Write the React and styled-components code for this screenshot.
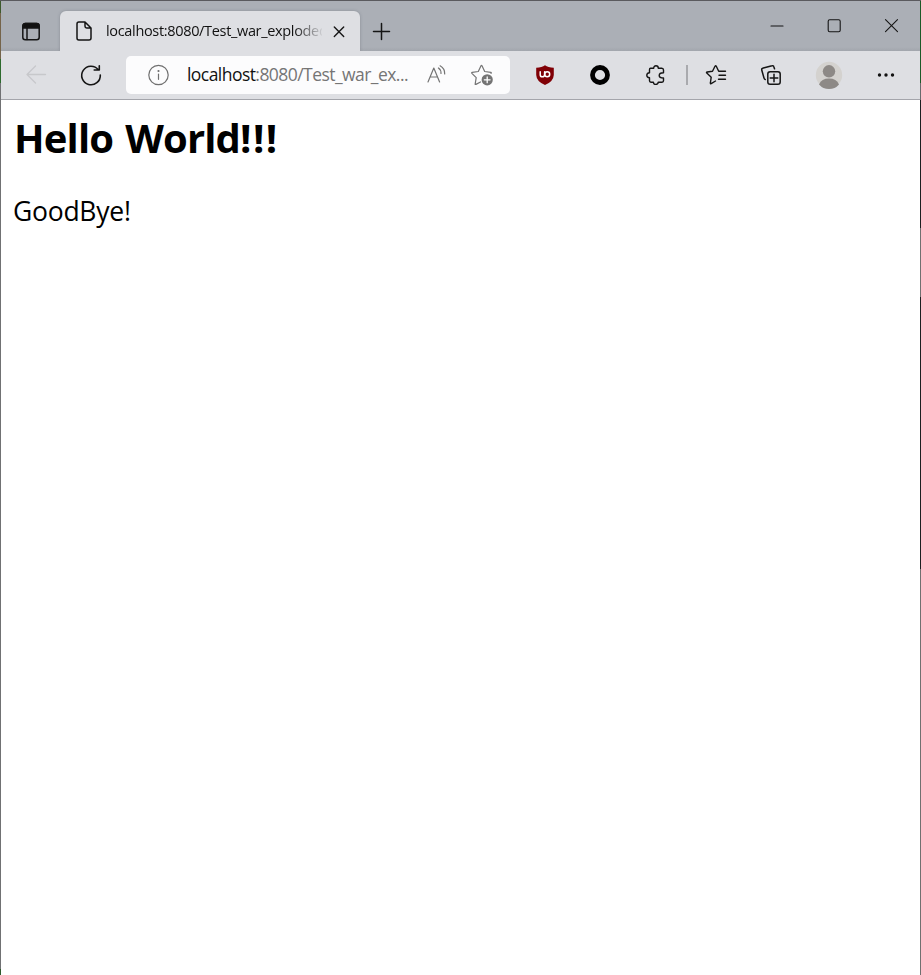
import React from "react";
import styled, { createGlobalStyle } from "styled-components";

const GlobalStyle = createGlobalStyle`
  * { box-sizing: border-box; }
  body { margin: 0; background: #fff; }
`;

const Window = styled.div`
  display: grid;
  grid-template-columns: 1px 919px 1px;
  width: 921px;
  height: 975px;
  overflow: hidden;
  border-top: 1px solid #5a5a5e;
  font-family: "Open Sans", "Noto Sans", sans-serif;
`;
const LeftEdge = styled.div`
  background: linear-gradient(#3d5a2c 0 12px, #75644a 12px 58px, #2d6b2e 58px 82px, #707173 82px 968px, #2d5a2c 968px);
`;
const RightEdge = styled.div`
  background: linear-gradient(#1d5a28 0 82px, #686a6c 82px 99px, #1c1f20 99px 227px, #707070 227px 296px, #1c1f20 296px 568px, #707070 568px);
`;
const Frame = styled.div`
  display: flex;
  flex-direction: column;
  min-width: 0;
  background: #fff;
`;
const TabStrip = styled.header`
  display: flex;
  height: 50px;
  background: linear-gradient(#abafb6 0 46px, #a2a6ad 50px);
`;
const TabMenu = styled.div`
  display: flex;
  align-items: center;
  justify-content: center;
  width: 59px;
  padding: 11px 0 0 1px;
`;
const Tab = styled.div`
  display: flex;
  align-items: center;
  width: 300px;
  height: 40px;
  margin-top: 10px;
  padding: 0 11px 0 15px;
  border-radius: 6px 6px 0 0;
  background: #dedfe3;
  box-shadow: 0 0 3px rgba(70, 75, 85, 0.35);
  clip-path: inset(-3px -3px 0 -3px);
`;
const TabTitle = styled.span`
  width: 216px;
  margin: 0 8px 0 13px;
  overflow: hidden;
  white-space: nowrap;
  font-size: 14.5px;
  line-height: 22px;
  letter-spacing: -0.33px;
  color: #111;
  mask-image: linear-gradient(to right, #000 188px, transparent 218px);
`;
const NewTab = styled.div`
  display: flex;
  align-items: center;
  width: 44px;
  padding: 9px 0 0 12px;
`;
const WindowControls = styled.div`
  display: grid;
  grid-template-columns: repeat(3, 57.5px);
  margin-left: auto;
  height: 49px;
  padding-left: 1px;
  place-items: center;
`;
const Toolbar = styled.nav`
  display: grid;
  grid-template-columns: 70px 40px 15px 384px 7px 56px 54px 57px 5px 54px 56px 60px 54px 1fr;
  align-items: center;
  height: 49px;
  background: #dedfe3;
  border-bottom: 1px solid #a4a5ab;
`;
const Cell = styled.div`
  grid-column: ${(p) => p.$col};
  display: flex;
  align-items: center;
  justify-content: center;
`;
const AddressBar = styled.div`
  grid-column: 4;
  display: flex;
  align-items: center;
  height: 38px;
  border-radius: 5px;
  background: #fcfcfd;
  padding: 0 17px 0 21px;
`;
const Url = styled.span`
  width: 225px;
  margin: 0 15px 2px 18px;
  white-space: nowrap;
  font-size: 17.5px;
  line-height: 26px;
  letter-spacing: -0.55px;
  color: #757575;
`;
const Host = styled.span`
  color: #111;
`;
const Divider = styled.div`
  grid-column: 9;
  justify-self: center;
  width: 2px;
  height: 20px;
  background: #a9aaae;
`;
const Page = styled.main`
  flex: 1;
  padding: 11px 12px;
  color: #000;
`;
const Heading = styled.h1`
  margin: 0 0 0 1px;
  font-size: 40px;
  line-height: 54px;
  font-weight: 700;
  letter-spacing: -0.85px;
  word-spacing: 2.5px;
`;
const Exclamation = styled.span`
  letter-spacing: 1.4px;
`;
const Paragraph = styled.p`
  margin: 28px 0 0;
  font-size: 26.5px;
  line-height: 36px;
  letter-spacing: -0.25px;
`;
const Glyph = styled.svg`
  display: block;
  flex: none;
  overflow: visible;
  fill: none;
  stroke: ${(p) => p.$color || "#151515"};
  stroke-width: ${(p) => p.$weight || 1.5};
  stroke-linecap: round;
  stroke-linejoin: round;
`;
const AddressGlyph = styled(Glyph)`
  margin-left: ${(p) => p.$gap || 0}px;
`;

const Icon = ({ w, h = w, color, weight, children }) => (
  <Glyph width={w} height={h} viewBox={`0 0 ${w} ${h}`} $color={color} $weight={weight}>{children}</Glyph>
);

export default function App() {
  return (
    <>
      <GlobalStyle />
      <Window>
        <LeftEdge />
        <Frame>
          <TabStrip>
            <TabMenu>
              <Icon w={18}>
                <rect x="0.8" y="0.5" width="16.4" height="16.2" rx="2.5" />
                <path d="M1 3Q1 .5 3.5 .5H14.5Q17 .5 17 3V5H1Z" fill="#111" />
                <path d="M5 5V16.5" />
              </Icon>
            </TabMenu>
            <Tab>
              <Icon w={18} h={20}>
                <path d="M3.8 1H10L16 7V17Q16 19 14 19H3.8Q2 19 2 17V3Q2 1 3.8 1ZM10 1V5.3Q10 7 11.7 7H16" />
              </Icon>
              <TabTitle>localhost:8080/Test_war_exploded</TabTitle>
              <Icon w={18} weight={1.4}><path d="M4.3 5L13.7 14.4M13.7 5L4.3 14.4" /></Icon>
            </Tab>
            <NewTab><Icon w={18}><path d="M9.5 1.5V17.5M1.5 9.5H17.5" /></Icon></NewTab>
            <WindowControls>
              <Icon w={14} weight={1.1}><path d="M2 7H14" /></Icon>
              <Icon w={14} weight={1.1}><rect x="1.2" y="0.7" width="12" height="12" rx="1.5" /></Icon>
              <Icon w={14} weight={1.1}><path d="M1.5 .7L13.5 12.7M13.5 .7L1.5 12.7" /></Icon>
            </WindowControls>
          </TabStrip>
          <Toolbar>
            <Cell $col={1}><Icon w={20} color="#c7c8cb" weight={1.3}><path d="M19.5 9.5H1M9.5 1L1 9.5L9.5 18" /></Icon></Cell>
            <Cell $col={2}><Icon w={20} weight={1.6}><path d="M19.3 10A9.3 9.3 0 1 1 17.3 4.7M18.3 .7V5H13.2" /></Icon></Cell>
            <AddressBar>
              <Glyph width="22" height="22" viewBox="0 0 22 22" $color="#707070" $weight={1.2}>
                <circle cx="11.5" cy="11" r="9.7" /><path d="M11.5 10V15.3" /><circle cx="11.5" cy="7" r=".5" fill="#707070" />
              </Glyph>
              <Url><Host>localhost</Host>:8080/Test_war_ex...</Url>
              <Glyph width="20" height="20" viewBox="0 0 20 20" $color="#747474" $weight={1.2}>
                <path d="M1 17L6.8 3L12.6 17M3.2 12H10.4M11.4 3Q14.2 4.8 14 8.5M13.1 .8Q18 3.5 17.7 9" />
              </Glyph>
              <AddressGlyph $gap={24} width="22" height="22" viewBox="0 0 22 22" $color="#747474" $weight={1.2}>
                <path d="M9.5 18L4.9 20.4Q4 20.8 4.2 19.8L5.2 13.6L.9 9.3Q.3 8.6 1.2 8.4L7.3 7.5L10 1.8Q10.5 .9 11 1.8L13.7 7.5L19.8 8.4Q20.7 8.6 20 9.4" />
                <circle cx="16.2" cy="15.8" r="5.6" fill="#747474" stroke="none" />
                <path d="M16.2 12.9V18.7M13.3 15.8H19.1" stroke="#fff" strokeWidth="1.3" />
              </AddressGlyph>
            </AddressBar>
            <Cell $col={6}>
              <Icon w={20}>
                <path d="M10 .2Q13 2.6 18.8 2.8V10Q18.5 16.5 10 20Q1.5 16.5 1.2 10V2.8Q7 2.6 10 .2Z" fill="#800006" stroke="none" />
                <path d="M5.2 6.7V9.7Q5.2 11.8 7.3 11.8Q9.6 11.8 9.6 9.4V6.7" stroke="#fff" />
                <circle cx="12.2" cy="9.3" r="2.5" stroke="#fff" />
              </Icon>
            </Cell>
            <Cell $col={7}><Icon w={20} color="#000" weight={4.8}><circle cx="10" cy="10" r="7.5" /></Icon></Cell>
            <Cell $col={8}>
              <Icon w={20} weight={1.4}>
                <path d="M4.5 3.2H7.7Q7.7 .8 10 .8Q12.3 .8 12.3 3.2H15.8Q17.5 3.2 17.5 5V7.8Q13.2 7.8 13.2 10.5Q13.2 13 17.5 13V15.8Q17.5 17.2 16 17.2H12.3Q12 19.4 9.8 19.4Q7.6 19.4 7.4 17.2H5Q3.5 17.2 3.5 15.8V12.8Q.8 12.6 .8 10.3Q.8 8 3.5 7.8V4.8Q3.5 3.2 4.5 3.2Z" />
              </Icon>
            </Cell>
            <Divider />
            <Cell $col={10}>
              <Icon w={20} weight={1.4}>
                <path d="M9.5 16L5.2 18.7Q4.2 19 4.4 18L5.2 12.2L.8 8.1Q0 7.2 1.2 7L6.5 6.2L9 1.3Q9.7 .2 10.3 1.3L12.7 6.2H19.5M13 10.2H19.5M12.5 14.3H19.5" />
              </Icon>
            </Cell>
            <Cell $col={11}>
              <Icon w={20} weight={1.5}>
                <rect x="6.8" y="6.8" width="12.4" height="12.4" rx="2.3" />
                <path d="M13 9.2V16.8M9.2 13H16.8M13.5 3.8L12.9 1.9Q12.5 .4 11 .8L2.3 2.9Q.3 3.4 .8 5.3L3 13Q3.4 14.3 4.2 14.5" />
              </Icon>
            </Cell>
            <Cell $col={12}>
              <Icon w={28}>
                <circle cx="14" cy="14" r="13.2" fill="#d4d2cf" stroke="none" />
                <circle cx="14" cy="10.3" r="6.2" fill="#8d8986" stroke="none" />
                <path d="M4 23.4Q6.5 17.6 14 17.6Q21.5 17.6 24 23.4Q20 28 14 28Q8 28 4 23.4Z" fill="#8d8986" stroke="none" />
              </Icon>
            </Cell>
            <Cell $col={13}>
              <Icon w={18}><circle cx="2.5" cy="9" r="1.7" fill="#111" stroke="none" /><circle cx="9" cy="9" r="1.7" fill="#111" stroke="none" /><circle cx="15.5" cy="9" r="1.7" fill="#111" stroke="none" /></Icon>
            </Cell>
          </Toolbar>
          <Page>
            <Heading>Hello World<Exclamation>!!!</Exclamation></Heading>
            <Paragraph>GoodBye!</Paragraph>
          </Page>
        </Frame>
        <RightEdge />
      </Window>
    </>
  );
}
